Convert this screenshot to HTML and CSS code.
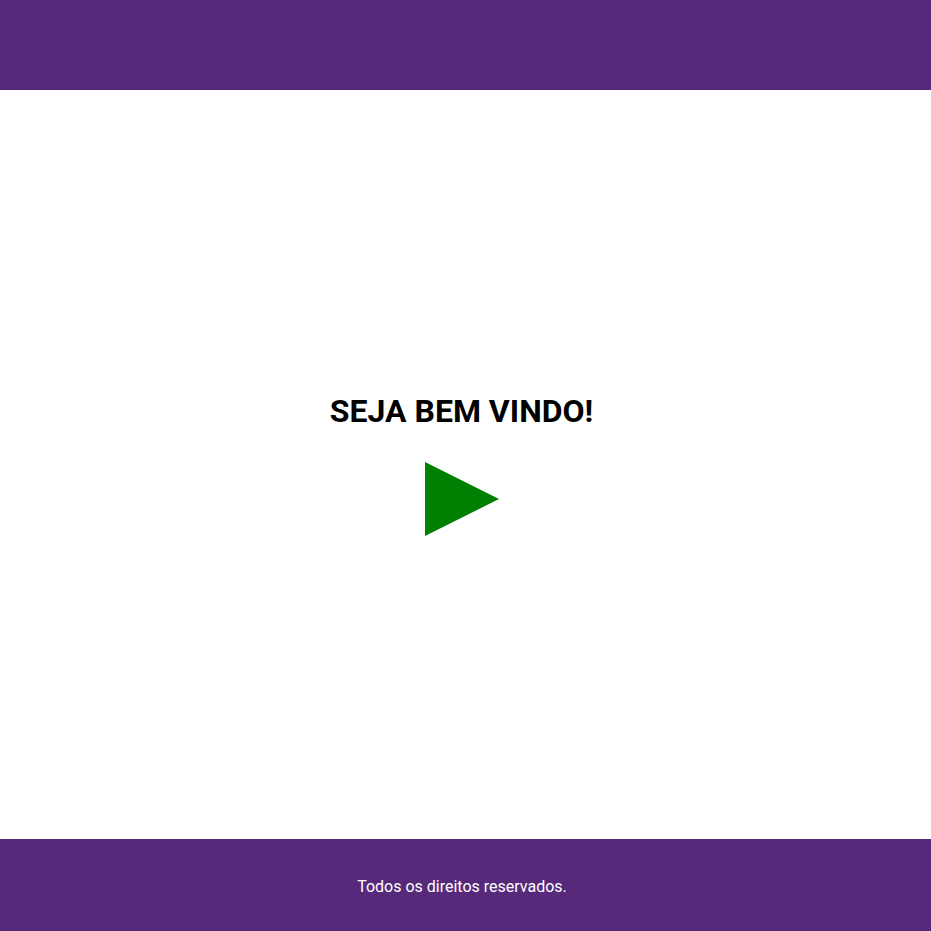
FILE: index.html
```html
<!DOCTYPE html>
<html lang="pt-BR">
<head>
<meta charset="utf-8">
<title>Bem vindo</title>
<link rel="stylesheet" href="styles.css">
</head>
<body>
<header class="topbar"></header>
<main class="hero">
  <h1 class="hero-title">SEJA BEM VINDO!</h1>
  <button class="play" aria-label="Iniciar"></button>
</main>
<footer class="bottombar">
  <p class="copy">Todos os direitos reservados.</p>
</footer>
</body>
</html>
```
FILE: styles.css
```css
html, body {
  margin: 0;
  padding: 0;
  height: 100%;
}
body {
  font-family: Roboto, "Liberation Sans", sans-serif;
  display: flex;
  flex-direction: column;
  background: #fff;
}
.topbar {
  height: 90px;
  background: #56297b;
  flex: none;
}
.hero {
  flex: 1;
  display: flex;
  flex-direction: column;
  align-items: center;
  justify-content: center;
  padding: 0 8px 1px 0;
}
.hero-title {
  margin: 0 0 32px;
  font-size: 32px;
  font-weight: 700;
  color: #000;
  line-height: 37px;
}
.play {
  width: 0;
  height: 0;
  padding: 0;
  background: none;
  border-style: solid;
  border-width: 37px 0 37px 74px;
  border-color: transparent transparent transparent #008000;
  cursor: pointer;
}
.bottombar {
  height: 92px;
  flex: none;
  background: #56297b;
  display: flex;
  align-items: center;
  justify-content: center;
  padding: 2px 7px 0 0;
  box-sizing: border-box;
}
.copy {
  margin: 0;
  color: #fff;
  font-size: 16px;
}
```
